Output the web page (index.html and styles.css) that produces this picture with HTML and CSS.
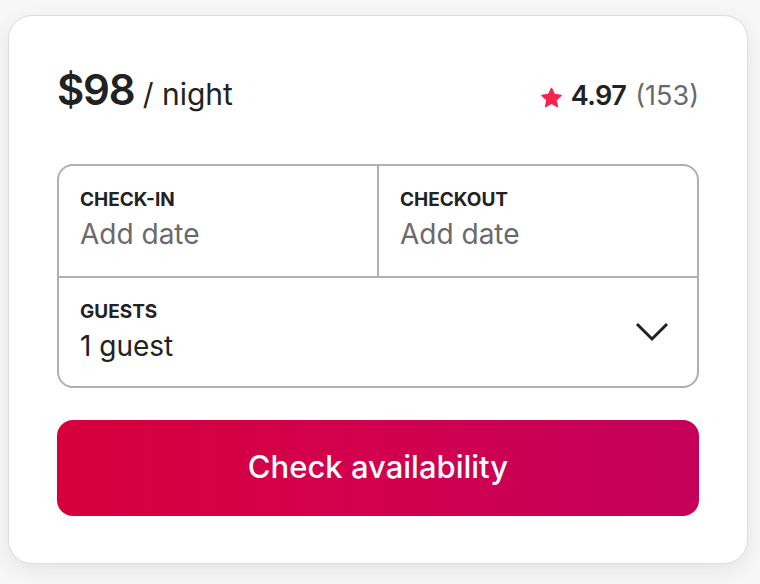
FILE: index.html
```html
<!DOCTYPE html>
<html lang="en">
<head>
<meta charset="utf-8">
<title>Booking</title>
<link rel="stylesheet" href="styles.css">
</head>
<body>
<div class="card">
  <div class="price-row">
    <div class="price"><span class="amount">$98</span><span class="per"> / night</span></div>
    <div class="rating">
      <svg class="star" viewBox="0 0 32 32" aria-hidden="true"><path d="M15.094 1.579l-4.124 8.885-9.86 1.27a1 1 0 0 0-.542 1.736l7.293 6.565-1.965 9.852a1 1 0 0 0 1.483 1.061L16 25.951l8.625 4.997a1 1 0 0 0 1.482-1.06l-1.965-9.853 7.293-6.565a1 1 0 0 0-.541-1.735l-9.86-1.271-4.127-8.885a1 1 0 0 0-1.814 0z"/></svg>
      <span class="score">4.97</span>
      <span class="count">(153)</span>
    </div>
  </div>
  <div class="form">
    <div class="dates">
      <div class="cell">
        <div class="label">CHECK-IN</div>
        <div class="value muted">Add date</div>
      </div>
      <div class="cell cell-right">
        <div class="label">CHECKOUT</div>
        <div class="value muted">Add date</div>
      </div>
    </div>
    <div class="guests">
      <div class="guest-info">
        <div class="label">GUESTS</div>
        <div class="value">1 guest</div>
      </div>
      <svg class="chevron" viewBox="0 0 34 20" aria-hidden="true"><polyline points="2,2 17,17 32,2"/></svg>
    </div>
  </div>
  <button class="cta">Check availability</button>
</div>
</body>
</html>
```
FILE: styles.css
```css
* { box-sizing: border-box; }
html, body { margin: 0; padding: 0; }
body {
  background: #f7f7f7;
  font-family: Inter, "Noto Sans", "Liberation Sans", sans-serif;
  color: #222222;
  width: 760px;
  height: 584px;
  overflow: hidden;
}
.card {
  margin: 15px 0 0 8px;
  width: 740px;
  background: #ffffff;
  border: 1px solid #dddddd;
  border-radius: 24px;
  box-shadow: 0 6px 20px rgba(0, 0, 0, 0.08);
  padding: 46px 48px 47px;
}
.price-row {
  height: 56px;
  display: flex;
  justify-content: space-between;
  align-items: baseline;
  line-height: 56px;
  margin-bottom: 46px;
}
.amount {
  font-size: 42px;
  font-weight: 600;
  letter-spacing: -0.03em;
}
.per {
  font-size: 30px;
  font-weight: 400;
}
.rating {
  display: flex;
  align-items: baseline;
  font-size: 27px;
}
.star {
  width: 21px;
  height: 21px;
  fill: #f5234f;
  margin-right: 9px;
  align-self: center;
  position: relative;
  top: 1px;
}
.score { font-weight: 600; margin-right: 9px; letter-spacing: -0.02em; }
.count { color: #6a6a6a; }
.form {
  border: 2px solid #b0b0b0;
  border-radius: 16px;
  height: 224px;
}
.dates {
  display: flex;
  height: 112px;
  border-bottom: 2px solid #b0b0b0;
}
.cell {
  flex: 1;
  padding: 22px 21px 0;
}
.cell-right { border-left: 2px solid #b0b0b0; }
.label {
  font-size: 19px;
  font-weight: 700;
  line-height: 24px;
  margin-bottom: 4px;
}
.value {
  font-size: 28px;
  line-height: 36px;
}
.muted { color: #6a6a6a; }
.guests {
  height: 108px;
  display: flex;
  align-items: center;
  justify-content: space-between;
  padding: 0 28px 0 21px;
}
.chevron {
  width: 34px;
  height: 20px;
  fill: none;
  stroke: #222222;
  stroke-width: 3;
}
.cta {
  display: block;
  width: 100%;
  height: 96px;
  margin-top: 32px;
  border: none;
  border-radius: 16px;
  background: linear-gradient(90deg, #d7003d 0%, #d2004e 50%, #c4005a 100%);
  color: #ffffff;
  font-family: Inter, "Noto Sans", sans-serif;
  font-size: 31px;
  font-weight: 500;
  padding: 0 0 3px;
  cursor: pointer;
}
```
